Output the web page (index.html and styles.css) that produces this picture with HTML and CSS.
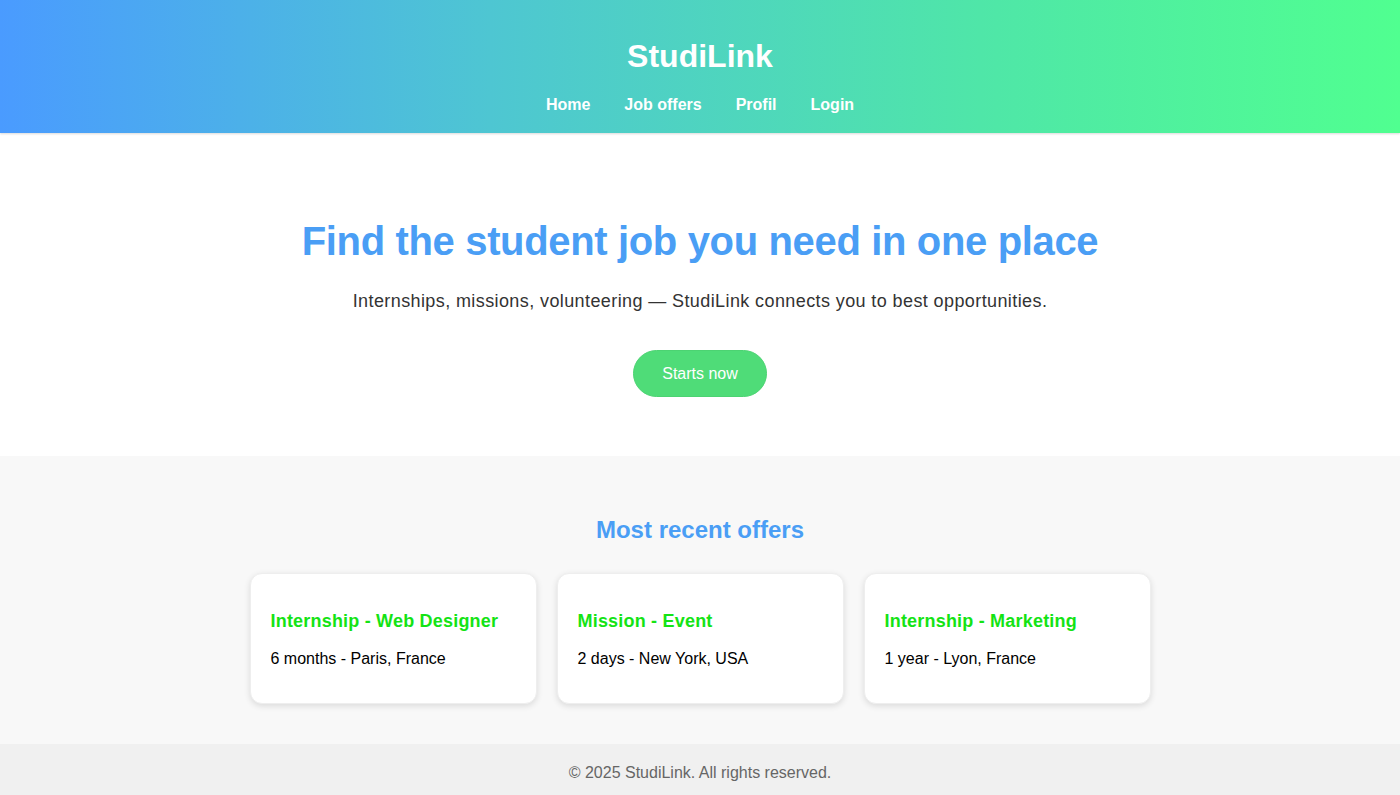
FILE: index.html
```html
<!DOCTYPE html>
<html lang="en">
<head>
<meta charset="utf-8">
<title>StudiLink</title>
<link rel="stylesheet" href="styles.css">
</head>
<body>
<header class="site-header">
  <h1 class="logo">StudiLink</h1>
  <nav class="nav">
    <a href="#">Home</a>
    <a href="#">Job offers</a>
    <a href="#">Profil</a>
    <a href="#">Login</a>
  </nav>
</header>
<section class="hero">
  <h2 class="hero-title">Find the student job you need in one place</h2>
  <p class="hero-sub">Internships, missions, volunteering — StudiLink connects you to best opportunities.</p>
  <a class="btn" href="#">Starts now</a>
</section>
<section class="offers">
  <h2 class="offers-title">Most recent offers</h2>
  <div class="cards">
    <div class="card">
      <h3>Internship - Web Designer</h3>
      <p>6 months - Paris, France</p>
    </div>
    <div class="card">
      <h3>Mission - Event</h3>
      <p>2 days - New York, USA</p>
    </div>
    <div class="card">
      <h3>Internship - Marketing</h3>
      <p>1 year - Lyon, France</p>
    </div>
  </div>
</section>
<footer class="footer">
  <p>© 2025 StudiLink. All rights reserved.</p>
</footer>
</body>
</html>
```
FILE: styles.css
```css
* { box-sizing: border-box; }
body {
  margin: 0;
  font-family: "Liberation Sans", Arial, sans-serif;
  color: #000;
  background: #fff;
}
.site-header {
  background: linear-gradient(to right, #4a9bff, #4ec6d2 35%, #4fe6a8 70%, #50ff90);
  padding: 20px 0 19px;
  text-align: center;
  color: #fff;
  box-shadow: 0 1px 2px rgba(0,0,0,0.15);
}
.logo {
  margin: 18px 0 21px;
  font-size: 32px;
  line-height: 37px;
  font-weight: bold;
}
.nav {
  display: flex;
  justify-content: center;
  gap: 34px;
}
.nav a {
  color: #fff;
  text-decoration: none;
  font-weight: bold;
  font-size: 16px;
  line-height: 18px;
}
.hero {
  padding: 60px 20px 59px;
  text-align: center;
}
.hero-title {
  margin: 25px 0 27px;
  font-size: 40px;
  line-height: 46px;
  letter-spacing: -0.35px;
  color: #4a9ef5;
}
.hero-sub {
  margin: 0 0 38px;
  font-size: 18px;
  line-height: 21px;
  letter-spacing: 0.4px;
  color: #333;
}
.btn {
  display: inline-block;
  background: #4fdc78;
  color: #fff;
  text-decoration: none;
  font-size: 16px;
  line-height: 19px;
  padding: 13px 28px;
  border-radius: 25px;
  border: 1px solid #4cd372;
  height: 47px;
}
.offers {
  background: #f8f8f8;
  padding: 40px 20px;
  text-align: center;
}
.offers-title {
  margin: 20px 0 29px;
  font-size: 24px;
  line-height: 28px;
  color: #4a9ef5;
}
.cards {
  display: flex;
  justify-content: center;
  gap: 20px;
}
.card {
  width: 287px;
  background: #fff;
  border-radius: 12px;
  padding: 20px;
  text-align: left;
  box-shadow: 0 2px 6px rgba(0,0,0,0.12);
  border: 1px solid #eee;
}
.card h3 {
  margin: 17px 0 18px;
  font-size: 18px;
  line-height: 21px;
  letter-spacing: 0.2px;
  color: #14e314;
}
.card p {
  margin: 0 0 15px;
  font-size: 16px;
  line-height: 18px;
}
.footer {
  background: #f0f0f0;
  text-align: center;
  padding: 20px;
}
.footer p {
  margin: 0;
  font-size: 16px;
  line-height: 18px;
  color: #666;
}
```
